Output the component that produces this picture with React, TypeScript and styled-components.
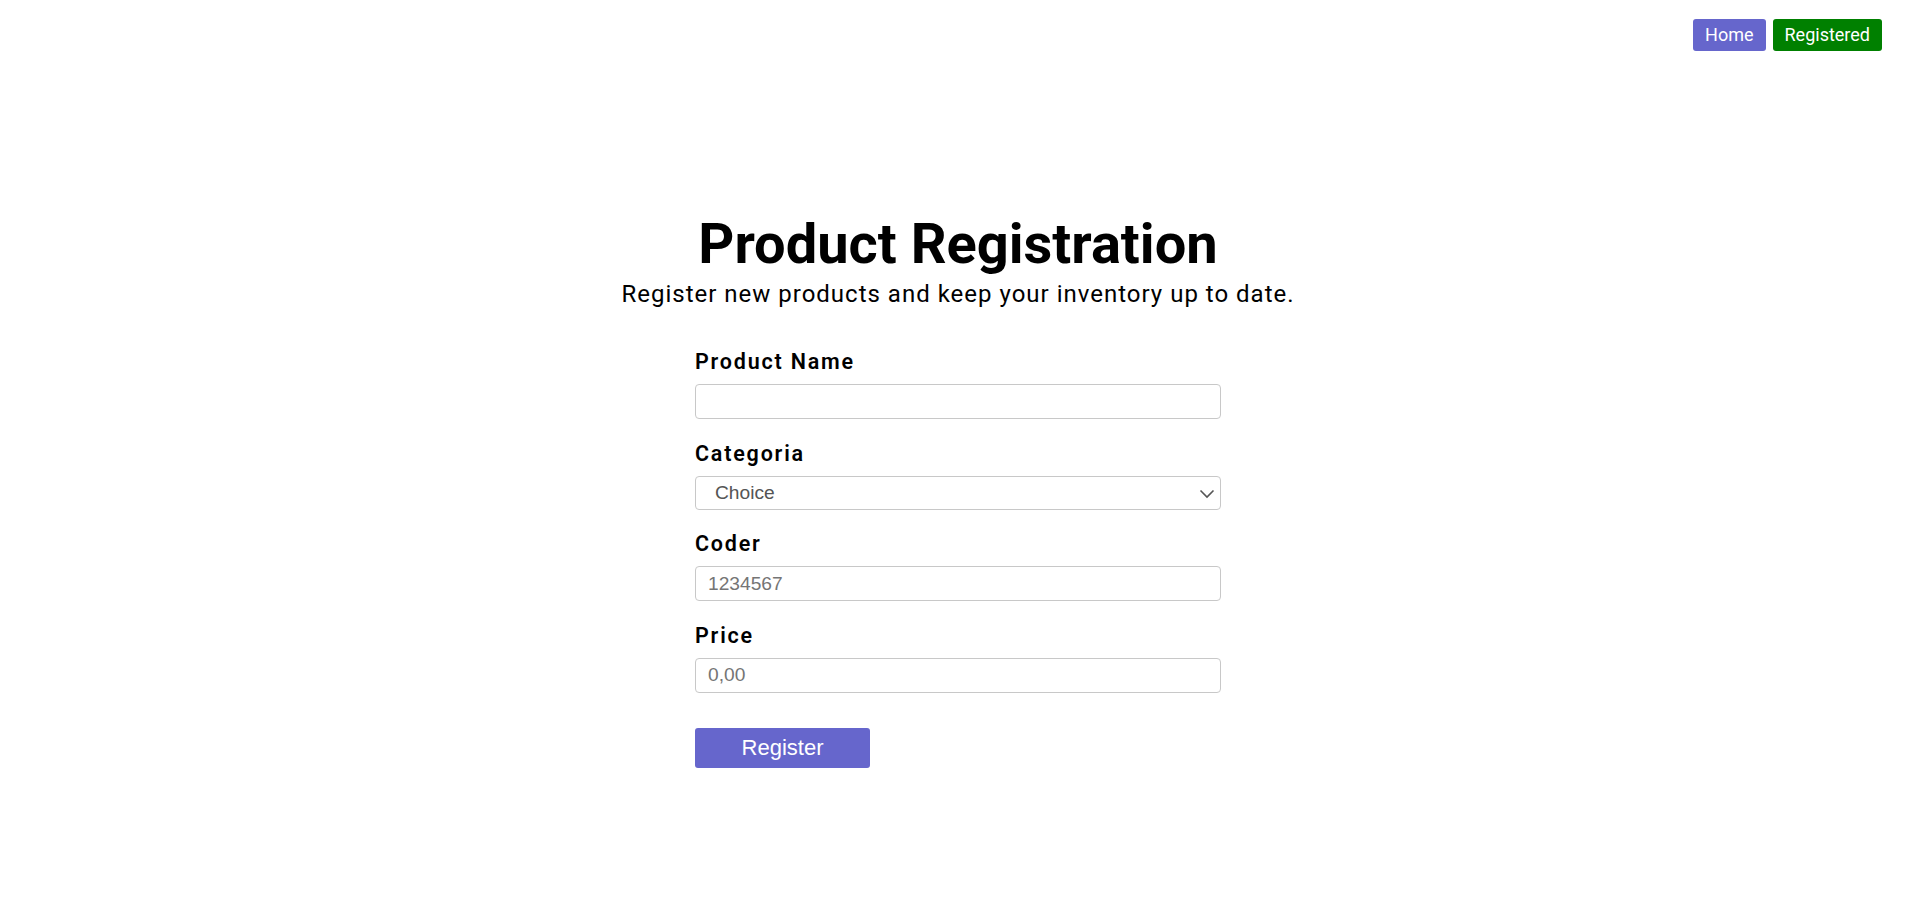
import React from "react";
import styled, { createGlobalStyle } from "styled-components";

const GlobalStyle = createGlobalStyle`
  html, body {
    margin: 0;
    padding: 0;
    background: #ffffff;
  }
  body {
    font-family: Roboto, "Liberation Sans", Arial, sans-serif;
    color: #000;
  }
  * { box-sizing: border-box; }
`;

const Page = styled.div`
  min-height: 911px;
  display: flex;
  flex-direction: column;
`;

const Header = styled.nav`
  display: flex;
  justify-content: flex-end;
  gap: 7px;
  padding: 19px 34px 0 0;
`;

const NavButton = styled.button<{ $bg: string }>`
  font-family: Roboto, "Liberation Sans", Arial, sans-serif;
  font-size: 18px;
  line-height: 22px;
  padding: 5px 12px;
  color: #fff;
  background: ${(p) => p.$bg};
  border: none;
  border-radius: 3px;
  cursor: pointer;
`;

const Main = styled.main`
  display: flex;
  flex-direction: column;
  align-items: center;
  padding-top: 160px;
`;

const Title = styled.h1`
  margin: 0;
  font-family: Roboto, sans-serif;
  font-size: 56px;
  font-weight: 700;
  line-height: normal;
`;

const Subtitle = styled.p`
  margin: 3px 0 0;
  font-family: Roboto, sans-serif;
  font-size: 24px;
  font-weight: 400;
  letter-spacing: 1px;
  line-height: normal;
`;

const Form = styled.form`
  width: 526px;
  margin-top: 42px;
  display: flex;
  flex-direction: column;
  align-items: flex-start;
`;

const Field = styled.div`
  width: 100%;
  display: flex;
  flex-direction: column;
  margin-bottom: 22.5px;
`;

const Label = styled.label`
  font-family: Roboto, sans-serif;
  font-size: 21.5px;
  font-weight: 600;
  letter-spacing: 1.8px;
  line-height: 24px;
  margin-bottom: 10px;
`;

const controlStyles = `
  width: 100%;
  height: 35px;
  border: 1px solid #c8c8c8;
  border-radius: 4px;
  font-family: "Liberation Sans", Arial, sans-serif;
  font-size: 19.2px;
  background: #fff;
  outline: none;
`;

const TextInput = styled.input`
  ${controlStyles}
  padding: 0 12px;
  color: #333;
  &::placeholder {
    color: #757575;
  }
`;

const SelectWrap = styled.div`
  position: relative;
  width: 100%;
`;

const Select = styled.select`
  ${controlStyles}
  height: 34px;
  padding: 0 30px 0 19px;
  color: #555;
  appearance: none;
  -webkit-appearance: none;
  display: block;
`;

const Chevron = styled.svg`
  position: absolute;
  right: 6px;
  top: 50%;
  width: 16px;
  height: 10px;
  margin-top: -4px;
  pointer-events: none;
`;

const SubmitButton = styled.button`
  margin-top: 13px;
  width: 175px;
  height: 40px;
  border: none;
  border-radius: 3px;
  background: #6666cc;
  color: #fff;
  font-family: "Liberation Sans", Arial, sans-serif;
  font-size: 22px;
  cursor: pointer;
`;

export default function App() {
  return (
    <>
      <GlobalStyle />
      <Page>
        <Header>
          <NavButton $bg="#6666cc">Home</NavButton>
          <NavButton $bg="#008000">Registered</NavButton>
        </Header>
        <Main>
          <Title>Product Registration</Title>
          <Subtitle>Register new products and keep your inventory up to date.</Subtitle>
          <Form onSubmit={(e) => e.preventDefault()}>
            <Field>
              <Label htmlFor="name">Product Name</Label>
              <TextInput id="name" type="text" />
            </Field>
            <Field>
              <Label htmlFor="cat">Categoria</Label>
              <SelectWrap>
                <Select id="cat" defaultValue="">
                  <option value="">Choice</option>
                  <option value="a">Eletrônicos</option>
                  <option value="b">Alimentos</option>
                </Select>
                <Chevron viewBox="0 0 16 10" aria-hidden="true">
                  <path d="M1.5 1.5 L8 8 L14.5 1.5" fill="none" stroke="#555" strokeWidth="1.6" />
                </Chevron>
              </SelectWrap>
            </Field>
            <Field>
              <Label htmlFor="code">Coder</Label>
              <TextInput id="code" type="text" placeholder="1234567" />
            </Field>
            <Field>
              <Label htmlFor="price">Price</Label>
              <TextInput id="price" type="text" placeholder="0,00" />
            </Field>
            <SubmitButton type="submit">Register</SubmitButton>
          </Form>
        </Main>
      </Page>
    </>
  );
}
